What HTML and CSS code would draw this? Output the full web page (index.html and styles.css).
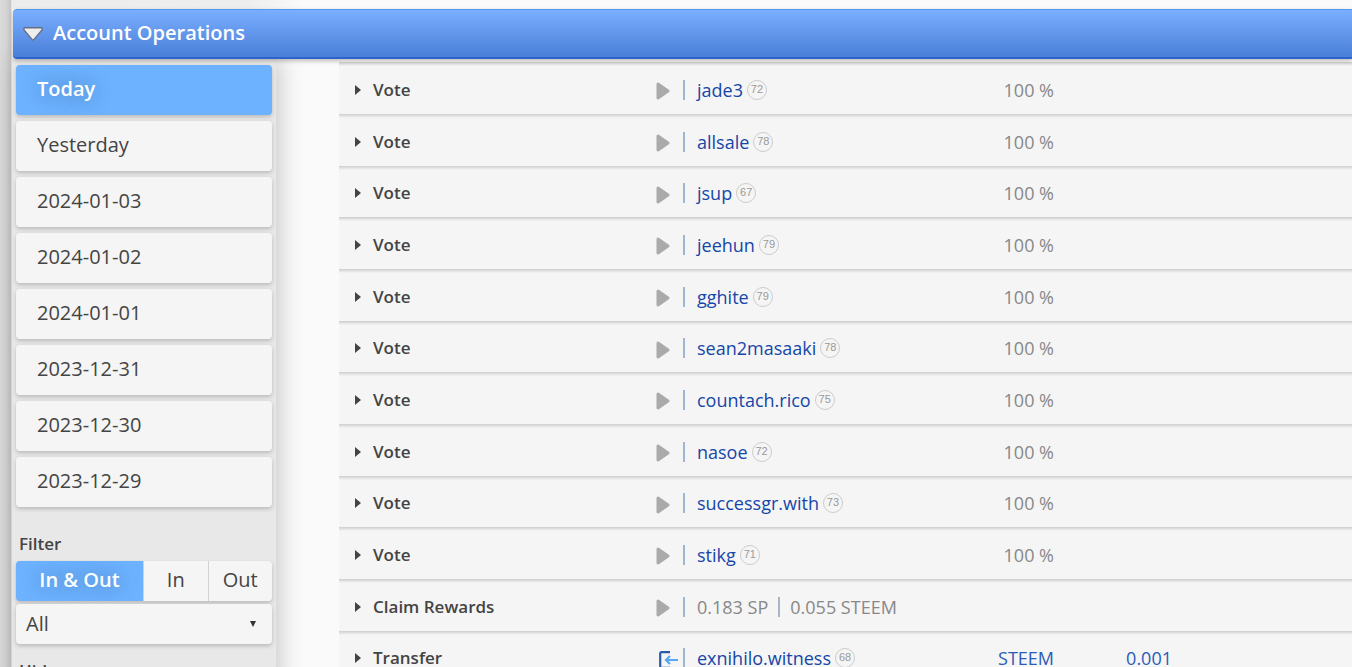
FILE: index.html
```
<!DOCTYPE html>
<html lang="en">
<head>
  <meta charset="UTF-8" />
  <meta name="viewport" content="width=device-width, initial-scale=1.0"/>
  <title>Account Operations</title>
  <link rel="stylesheet" href="styles.css">
</head>
<body>
  <svg class="sprite" aria-hidden="true">
    <symbol id="play" viewBox="0 0 14 18"><path d="M2 2 L12 9 L2 16 Z" fill="#aaa" stroke="#aaa" stroke-width="3" stroke-linejoin="round"/></symbol>
    <symbol id="incoming" viewBox="0 0 20 18">
      <path d="M11 1.2 H2.5 Q1.2 1.2 1.2 2.5 V15.5 Q1.2 16.8 2.5 16.8 H11" fill="none" stroke="#2a5caa" stroke-width="2.2"/>
      <path d="M19 9 H7 M11 5 L7 9 L11 13" fill="none" stroke="#58a6f5" stroke-width="2.2"/>
    </symbol>
  </svg>

  <main class="page">
    <div class="previous"></div>
    <h2 class="section-title">
      <button type="button" class="section-toggle">
        <svg width="20" height="14" viewBox="0 0 20 14" aria-hidden="true"><path d="M2.2 .8 H17.8 Q19.8 .8 19 3 L11 12.4 Q10 13.6 9 12.4 L1 3 Q.2 .8 2.2 .8 Z" fill="#eee" stroke="#666f80" stroke-width="1.4"/></svg>
        Account Operations
      </button>
    </h2>

    <div class="content">
      <aside class="sidebar">
        <nav class="days">
          <a href="#" class="day active">Today</a>
          <a href="#" class="day">Yesterday</a>
          <a href="#" class="day">2024-01-03</a>
          <a href="#" class="day">2024-01-02</a>
          <a href="#" class="day">2024-01-01</a>
          <a href="#" class="day">2023-12-31</a>
          <a href="#" class="day">2023-12-30</a>
          <a href="#" class="day">2023-12-29</a>
        </nav>
        <label class="label" for="type">Filter</label>
        <div class="direction">
          <button type="button" class="active">In &amp; Out</button>
          <button type="button">In</button>
          <button type="button">Out</button>
        </div>
        <div class="select">
          <select id="type"><option>All</option></select>
        </div>
        <div class="label">Hide</div>
      </aside>

      <table class="operations">
        <colgroup><col class="col-action"><col class="col-icon"><col class="col-account"><col class="col-value"><col class="col-amount"><col></colgroup>
        <tbody id="operations"></tbody>
      </table>
    </div>
  </main>

  <script>
    const votes = [
      ["jade3", 72], ["allsale", 78], ["jsup", 67], ["jeehun", 79], ["gghite", 79],
      ["sean2masaaki", 78], ["countach.rico", 75], ["nasoe", 72], ["successgr.with", 73], ["stikg", 71],
    ];

    const row = (action, icon, cells) => `<tr>
      <th scope="row"><span class="arrow"></span>${action}</th>
      <td class="icon"><svg class="${icon}"><use href="#${icon}"/></svg></td>${cells}</tr>`;

    const account = (name, level) => `<td class="account"><div class="detail"><a href="#">${name}</a><span class="level">${level}</span></div></td>`;

    let html = "";
    votes.forEach(([name, level]) => {
      html += row("Vote", "play", account(name, level) + `<td class="value">100 %</td><td></td><td></td>`);
    });
    html += row("Claim Rewards", "play", `<td class="account" colspan="4"><div class="detail">0.183 SP<span class="bar"></span>0.055 STEEM</div></td>`);
    html += row("Transfer", "incoming", account("exnihilo.witness", 68) + `<td class="value blue">STEEM</td><td class="value blue">0.001</td><td></td>`);
    document.getElementById("operations").innerHTML = html;
  </script>
</body>
</html>
```
FILE: styles.css
```
* { box-sizing: border-box; }
html { height: 100%; overflow: hidden; }
body { margin: 0; min-height: 100%; padding-left: 12px; background: linear-gradient(to right, #dadada, #d6d6d6 5px, #c6c6c6 11px, #e4e4e4 11px, #e4e4e4 12px, #fafafa 12px); font-family: "Open Sans", "Noto Sans", sans-serif; font-size: 18px; color: #444; overflow: hidden; }
.sprite { display: none; }
button, select { font: inherit; color: inherit; border: none; background: none; padding: 0; cursor: pointer; }
a { text-decoration: none; color: inherit; }

.previous { width: 290px; height: 9px; background: linear-gradient(to right, #ececec, #eee 240px, #fafafa); }
.section-title { position: relative; margin: 0 0 0 1px; height: 50px; padding-left: 10px; border-top: 1px solid #5597e8; border-bottom: 2px solid #2f62cc; border-radius: 4px 0 0 4px; background: linear-gradient(#7aaeff, #4a7fd8); box-shadow: 0 2px 4px rgba(0,0,0,.25); font-size: 20px; }
.section-toggle { display: flex; align-items: center; gap: 10px; height: 45px; color: #fff; font-weight: 600; }
.section-toggle svg { margin-top: 3px; }

.content { display: flex; align-items: flex-start; }
.sidebar { flex: none; width: 264px; min-height: 620px; padding: 6px 4px 0; background: #e8e8e8; box-shadow: 4px 0 22px rgba(0,0,0,.2); font-size: 20px; }
.days { display: grid; gap: 6px; }
.day { height: 50px; padding-left: 21px; line-height: 48px; border-radius: 4px; background: #f5f5f5; box-shadow: 0 2px 4px rgba(0,0,0,.2); }
.active { color: #fff; font-weight: 600; text-shadow: 0 0 20px rgba(0,0,0,.4); }
.label { display: block; margin: 20px 3px 0; font-size: 17px; font-weight: 600; line-height: 34px; }
.direction { display: flex; height: 40px; gap: 1px; border-radius: 4px; background: #d2d2d2; box-shadow: 0 2px 4px rgba(0,0,0,.2); overflow: hidden; }
.direction button { flex: 1; padding-bottom: 3px; background: #f5f5f5; }
.day.active, .direction button.active { background: #6cb2ff; }
.direction button.active { flex: 2; }
.select { position: relative; margin-top: 3px; }
.select::after { content: ""; position: absolute; right: 16px; top: 17px; border: 3px solid transparent; border-top: 6px solid #333; border-bottom: none; pointer-events: none; }
.select select { appearance: none; width: 100%; height: 40px; padding: 0 0 1px 10px; border-radius: 4px; background: #f5f5f5; box-shadow: 0 2px 4px rgba(0,0,0,.2); }
.select + .label { margin-top: 10px; }

.operations { flex: 1; min-width: 0; margin: 3px 0 0 63px; table-layout: fixed; border-spacing: 0; }
.col-action { width: 304px; }
.col-icon { width: 40px; }
.col-account { width: 271px; }
.col-value { width: 100px; }
.col-amount { width: 118px; }
.operations tr { height: 52px; background: linear-gradient(#cdcdcd, #e2e2e2 2px, #f5f5f5 4px); }
.operations tr:nth-child(3n) { height: 51px; }
.operations th, .operations td { padding: 3px 0 0; line-height: 24px; white-space: nowrap; }
.operations th { padding-left: 16px; font-size: 17px; font-weight: 600; text-align: left; }
.arrow { display: inline-block; margin-right: 12px; border: 5px solid transparent; border-left: 6px solid #444; border-right: none; vertical-align: 1px; }
.operations .icon { padding-top: 6px; }
.icon svg { display: block; width: 14px; height: 18px; margin-left: 13px; }
.icon svg.incoming { width: 20px; margin-left: 16px; }
.detail { display: flex; align-items: center; color: #888; }
.detail::before { content: ""; width: 2px; height: 20px; margin-right: 12px; background: #9fb6d2; }
.account a { color: #1546a8; }
.bar { width: 2px; height: 20px; margin: 0 10px; background: #a9b6c6; }
.level { width: 20px; height: 20px; margin-left: 4px; border: 1px solid #ccc; border-radius: 50%; color: #999; font: 11px/17px "Liberation Sans", sans-serif; text-align: center; }
.operations .value { color: #888; text-align: right; }
.operations .blue { color: #2a5cb8; }
```
